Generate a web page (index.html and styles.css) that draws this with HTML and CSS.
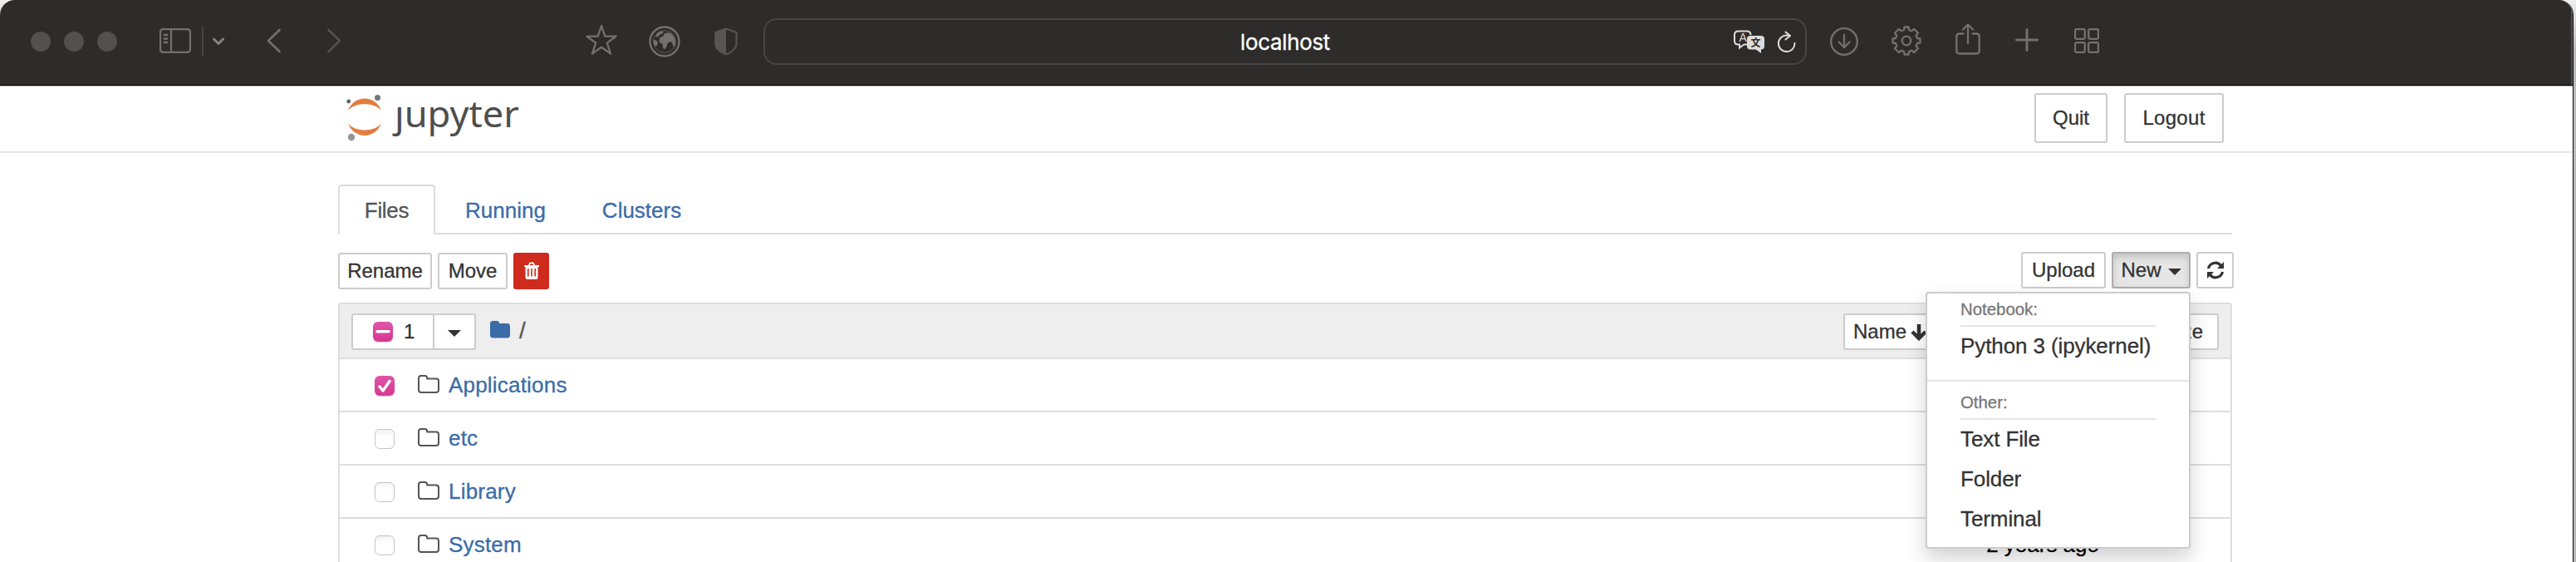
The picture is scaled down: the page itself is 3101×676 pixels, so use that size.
FILE: index.html
```html
<!DOCTYPE html>
<html lang="en">
<head>
<meta charset="utf-8">
<title>Home Page - Select or create a notebook</title>
<link rel="stylesheet" href="styles.css">
</head>
<body>
<div class="desktop">
<div class="window">
  <div class="chrome">
    <div class="lights"><i></i><i></i><i></i></div>
    <svg class="ico sidebar" width="38" height="30" viewBox="0 0 38 30"><rect x="1" y="1" width="36" height="28" rx="3.5"/><path d="M14 1v28M5.500 8h4M5.500 12.500h4M5.500 17h4"/></svg>
    <span class="sep"></span>
    <svg class="ico chev" width="14" height="10" viewBox="0 0 14 10"><path d="M1.500 2L7 7.500 12.500 2"/></svg>
    <svg class="ico back" width="18" height="30" viewBox="0 0 18 30"><path d="M15.500 2L2 15 15.500 28"/></svg>
    <svg class="ico fwd" width="18" height="30" viewBox="0 0 18 30"><path d="M2.500 2L16 15 2.500 28"/></svg>
    <svg class="ico star" width="38" height="38" viewBox="0 0 38 38"><path d="M19 2l4.300 12.700H36.500L25.800 22.600 30 35.500 19 27.800 8 35.500l4.200-12.900L1.500 14.700H14.700z"/></svg>
    <svg class="ico globe" width="38" height="38" viewBox="0 0 38 38"><circle cx="19" cy="19" r="17.500"/><circle class="thin" cx="19" cy="19" r="13.500"/><path class="fill" d="M6 17l3 .5 2 3-1 3-2.500 1.500C6 22.500 5.500 20 6 17zM8.500 11.500C10 9 12 7.300 15 6.500l3 .5-1.500 2.500-3 1-2 2.500-3 .5zM12.500 17l1-3 4-1.500 1-3 5-1.500 4 1.500C30 12 32 15 32 19l-.5 5-1.500 2-2-6-2.500-1-3 2.500-1.500 4.500-2.500 2.500-1.500-2-.5-5-3.500-1z"/></svg>
    <svg class="ico shield" width="28" height="34" viewBox="0 0 28 34"><path d="M14 1.500L26.500 6v14c0 6-6.500 10-12.500 12.500C8 30 1.500 26 1.500 20V6z"/><path class="fill" d="M14 .5L.5 5.500V20c0 6.500 6.500 10.500 13.500 13.500z"/></svg>
    <div class="address">
      <span class="host">localhost</span>
      <svg class="translate" width="38" height="29" viewBox="0 0 38 29"><path class="bubble" d="M16 17.500h-3.500L7 21.500v-4H5.500Q1 17.500 1 13V6Q1 1.500 5.500 1.500H16Q20.500 1.500 20.500 6"/><rect class="solid" x="16" y="7" width="21" height="16.500" rx="4"/><path class="solid" d="M26 23h7v5z"/><text class="ta" x="6.500" y="14">A</text><text class="tb" x="20.500" y="19.500">文</text></svg>
      <svg class="reload" width="23" height="26" viewBox="0 0 23 26"><path d="M15 5.500H12a9.800 9.800 0 1 0 9.500 9.500M10.500 1.500l5.500 4.500-5.500 4.500"/></svg>
    </div>
    <svg class="ico dl" width="34" height="34" viewBox="0 0 34 34"><circle cx="17" cy="17" r="15.800"/><path d="M17 9v15M10.500 17.500L17 24l6.500-6.500"/></svg>
    <svg class="ico gear" width="36" height="36" viewBox="-18 -18 36 36"><circle r="5.300"/><path d="M-3-13 L-2.500-16.500H2.500L3-13 6-11.700 9.300-14 14-9.300 11.700-6 13-3 16.500-2.500V2.500L13 3 11.700 6 14 9.300 9.300 14 6 11.700 3 13 2.500 16.500H-2.500L-3 13-6 11.700-9.300 14-14 9.300-11.700 6-13 3-16.500 2.500V-2.500L-13-3-11.700-6-14-9.300-9.300-14-6-11.700z"/></svg>
    <svg class="ico share" width="30" height="38" viewBox="0 0 30 38"><path d="M9.500 12.500H5Q1.300 12.500 1.300 16V33Q1.300 36.500 5 36.500H25Q28.700 36.500 28.700 33V16Q28.700 12.500 25 12.500H20.500M15 24V2M9 7.500l6-6 6 6"/></svg>
    <svg class="ico plus" width="28" height="28" viewBox="0 0 28 28"><path d="M14 1.500v25M1.500 14h25"/></svg>
    <svg class="ico grid" width="30" height="30" viewBox="0 0 30 30"><rect x="1" y="1" width="11.800" height="11.800" rx="2"/><rect x="17.200" y="1" width="11.800" height="11.800" rx="2"/><rect x="1" y="17.200" width="11.800" height="11.800" rx="2"/><rect x="17.200" y="17.200" width="11.800" height="11.800" rx="2"/></svg>
  </div>

  <header class="header">
    <svg class="logo" width="240" height="78" viewBox="0 0 240 78">
      <path fill="#e27d3f" d="M12 29C19 9.700 45 9.700 52 29 44 18.500 20 18.500 12 29zM12 44.500C19 63.700 45 63.700 52 44.500 44 55 20 55 12 44.500z"/>
      <circle cx="47.500" cy="13.500" r="3.500" fill="#767677"/><circle cx="12.700" cy="18" r="2.400" fill="#616262"/><circle cx="16" cy="61" r="4.200" fill="#989798"/>
      <text x="68" y="48.500" textLength="150" lengthAdjust="spacingAndGlyphs">ȷupyter</text>
    </svg>
    <div class="session"><button class="btn big">Quit</button><button class="btn big">Logout</button></div>
  </header>

  <main class="container">
    <nav class="tabs"><a class="tab active">Files</a><a class="tab running">Running</a><a class="tab">Clusters</a></nav>
    <div class="toolbar">
      <div class="group">
        <button class="btn rename">Rename</button><button class="btn move">Move</button>
        <button class="btn danger"><svg width="20" height="22" viewBox="0 0 20 22"><path fill="#fff" fill-rule="evenodd" d="M1 4h5l1-2.500Q7.500.500 8.500.500h3q1 0 1.500 1L14 4h5v2h-1.500v12.500q0 2.500-2.500 2.500H5q-2.500 0-2.500-2.500V6H1zM8 4h4l-.6-1.700H8.600zM5 8v9.500h1.600V8zM9.200 8v9.500h1.600V8zM13.400 8v9.500H15V8z"/></svg></button>
      </div>
      <div class="group right">
        <button class="btn upload">Upload</button>
        <div class="dropdown">
          <button class="btn new">New<span class="caret"></span></button>
          <div class="menu">
            <div class="menu-head">Notebook:</div>
            <a class="item">Python 3 (ipykernel)</a>
            <div class="divider"></div>
            <div class="menu-head">Other:</div>
            <a class="item">Text File</a>
            <a class="item">Folder</a>
            <a class="item">Terminal</a>
          </div>
        </div>
        <button class="btn refresh"><svg width="22" height="22" viewBox="0 0 22 22"><path class="arc" d="M2.500 9A8.500 8.500 0 0 1 17.500 5.500M19.500 13A8.500 8.500 0 0 1 4.500 16.500"/><path fill="#333" d="M21 1v8h-8zM1 21v-8h8z"/></svg></button>
      </div>
    </div>

    <div class="list">
      <div class="list-head">
        <div class="selector"><span class="count"><span class="check on"><svg width="24" height="24" viewBox="0 0 24 24"><path d="M5 11.700h14"/></svg></span>1</span><span class="toggle"><span class="caret"></span></span></div>
        <svg class="crumb" width="24" height="21" viewBox="0 0 24 21"><path fill="#3b6ca8" d="M0 3.500Q0 0 3.500 0H8q3 0 3 3h9.500Q24 3 24 6.500v10.500Q24 20.500 20.500 20.500h-17Q0 20.500 0 17z"/></svg>
        <span class="slash">/</span>
        <div class="sorts">
          <button class="btn name">Name<svg width="22" height="22" viewBox="0 0 22 22"><path d="M11 2v17M3 11l8 8 8-8"/></svg></button>
          <button class="btn size">size</button>
        </div>
      </div>
      <div class="row"><span class="check on"><svg width="24" height="24" viewBox="0 0 24 24"><path d="M6 13l4 5L18 6.500"/></svg></span><svg class="folder" width="26" height="22" viewBox="0 0 26 22"><path d="M1 4Q1 1 4 1H8.500Q11.300 1 11.300 4.500H22Q25 4.500 25 7.500V18Q25 21 22 21H4Q1 21 1 18z"/></svg><a>Applications</a></div>
      <div class="row"><span class="check"></span><svg class="folder" width="26" height="22" viewBox="0 0 26 22"><path d="M1 4Q1 1 4 1H8.500Q11.300 1 11.300 4.500H22Q25 4.500 25 7.500V18Q25 21 22 21H4Q1 21 1 18z"/></svg><a>etc</a></div>
      <div class="row"><span class="check"></span><svg class="folder" width="26" height="22" viewBox="0 0 26 22"><path d="M1 4Q1 1 4 1H8.500Q11.300 1 11.300 4.500H22Q25 4.500 25 7.500V18Q25 21 22 21H4Q1 21 1 18z"/></svg><a>Library</a></div>
      <div class="row"><span class="check"></span><svg class="folder" width="26" height="22" viewBox="0 0 26 22"><path d="M1 4Q1 1 4 1H8.500Q11.300 1 11.300 4.500H22Q25 4.500 25 7.500V18Q25 21 22 21H4Q1 21 1 18z"/></svg><a>System</a><span class="when">2 years ago</span></div>
    </div>
  </main>
</div>
</div>
</body>
</html>
```

FILE: styles.css
```css
* { box-sizing: border-box; }
body { margin: 0; font-family: "Liberation Sans", Arial, sans-serif; font-size: 26px; color: #333; -webkit-text-stroke: .3px; }
.desktop { height: 676px; overflow: hidden; background: linear-gradient(#eee, #bbb 60px, #b8b8b8); }
.window { width: 3098px; height: 700px; background: #fff; border-right: 1px solid #111; border-radius: 18px 18px 0 0; overflow: hidden; }
svg { display: block; flex: none; }

.chrome { height: 104px; padding: 0 0 2px 37px; display: flex; align-items: flex-start; background: #2e2c2a; border-bottom: 1px solid #b5b5b5; box-shadow: inset 0 -1px #000, inset -2px 0 #514f50; }
.lights { display: flex; gap: 16px; margin-top: 38px; }
.lights i { width: 24px; height: 24px; border-radius: 50%; background: #52514f; }
.ico { fill: none; stroke: #72716f; stroke-width: 2.300; stroke-linecap: round; stroke-linejoin: round; }
.ico .fill { fill: #72716f; stroke: none; }
.ico .thin { stroke-width: 1; stroke: #5c5b59; }
.sidebar { margin: 34px 0 0 51px; }
.sep { width: 2px; height: 36px; margin: 32px 0 0 13px; background: #444341; }
.chev { margin: 45px 0 0 11px; stroke-width: 3; stroke: #858482; }
.back { margin: 34px 0 0 51px; stroke-width: 2.600; }
.fwd { margin: 34px 0 0 54px; stroke: #53524f; stroke-width: 2.600; }
.star { margin: 29px 0 0 294px; }
.globe { margin: 31px 0 0 38px; }
.shield { margin: 33px 0 0 41px; stroke: #575654; stroke-width: 2; }
.ico.shield .fill { fill: #575654; }
.address { flex: none; display: flex; align-items: center; width: 1256px; height: 56px; margin: 22px 0 0 31px; border: 2px solid #474644; border-radius: 16px; color: #fff; }
.host { font: 26px/52px Inter, sans-serif; width: 110px; margin: 2px 484px 0 572px; letter-spacing: -.35px; white-space: nowrap; }
.translate { margin-right: 14px; }
.bubble { fill: none; stroke: #dedcdb; stroke-width: 2; }
.solid { fill: #dedcdb; }
.ta { font: 14px "Liberation Sans", sans-serif; fill: #dedcdb; }
.tb { font: bold 12px "Noto Sans CJK SC", sans-serif; fill: #2e2c2a; }
.reload { fill: none; stroke: #dedcdb; stroke-width: 2; stroke-linecap: round; stroke-linejoin: round; }
.dl { margin: 33px 0 0 28px; }
.gear { margin: 31px 0 0 40px; }
.share { margin: 28px 0 0 41px; }
.plus { margin: 34px 0 0 42px; stroke-width: 3; }
.grid { margin: 34px 0 0 43px; }

.header { height: 80px; padding-left: 407px; display: flex; border-bottom: 2px solid #e7e7e7; }
.logo text { font: 44px "Noto Sans", "Open Sans", sans-serif; fill: #4e4e4e; }
.session { display: flex; gap: 20px; margin: 8px 0 0 1802px; }
.btn { display: flex; align-items: center; justify-content: center; flex: none; height: 44px; padding: 0; margin: 0; border: 2px solid #ccc; border-radius: 3px; background: #fff; color: #333; font: 24px/36px "Liberation Sans", Arial, sans-serif; white-space: nowrap; }
.btn.big { height: 60px; width: 88px; }
.btn.big + .btn.big { width: 120px; letter-spacing: .3px; }

.container { width: 2280px; margin: 38px 0 0 407px; }
.tabs { display: flex; height: 60px; border-bottom: 2px solid #ddd; }
.tab { height: 60px; line-height: 62px; color: #3b6ca8; }
.tab.active { width: 117px; border: 2px solid #ddd; border-bottom: 0; border-radius: 4px 4px 0 0; background: #fff; color: #555; line-height: 58px; text-align: center; letter-spacing: -.3px; }
.tab.running { margin: 0 68px 0 36px; }
.toolbar { display: flex; justify-content: space-between; margin: 21px -2px 0 0; height: 61px; }
.group { display: flex; gap: 7px; margin-top: 1px; }
.group.right { margin-top: 0; }
.rename { width: 113px; }
.move { width: 84px; }
.danger { width: 43px; border-color: #cf2a1e; background: #cf2a1e; }
.upload { width: 102px; }
.dropdown { position: relative; }
.new { width: 95px; gap: 8px; border-color: #adadad; background: #e6e6e6; box-shadow: inset 0 5px 8px rgba(0,0,0,.15); }
.refresh { width: 45px; }
.refresh .arc { fill: none; stroke: #333; stroke-width: 3.200; }
.caret { border: 8px solid transparent; border-top-color: #333; border-bottom: 0; margin-top: 4px; }
.menu { position: absolute; right: 0; top: 48px; z-index: 5; width: 319px; height: 309px; padding: 9px 0; background: #fff; border: 2px solid #ccc; border-radius: 4px; box-shadow: 0 12px 24px rgba(0,0,0,.175); }
.menu-head { height: 31px; margin: 0 40px; font-size: 20.400px; line-height: 20px; color: #777; border-bottom: 2px solid #e5e5e5; }
.item { display: block; height: 48px; line-height: 46px; padding-left: 40px; letter-spacing: -.1px; }
.divider { height: 2px; margin: 16px 0 15px; background: #e5e5e5; }

.list { border: 2px solid #ddd; border-radius: 4px 4px 0 0; height: 330px; }
.list-head { height: 66px; display: flex; padding: 11px 14px 0; background: #eee; border-bottom: 2px solid #ddd; }
.selector { display: flex; width: 150px; height: 44px; border: 2px solid #ccc; border-radius: 3px; background: #fff; font-size: 24px; }
.count { display: flex; align-items: center; width: 98px; padding-left: 24px; gap: 13px; border-right: 2px solid #ccc; }
.toggle { display: flex; flex: 1; align-items: center; justify-content: center; }
.check { flex: none; width: 24px; height: 24px; border: 1px solid #c4c4c4; border-radius: 6px; background: linear-gradient(#f3f3f3, #fff 40%); }
.check.on { border: 0; background: linear-gradient(#df55a8, #d63890); box-shadow: 0 1px 1px #ffc4ec; }
.check path { fill: none; stroke: #fff; stroke-width: 3.400; stroke-linecap: round; stroke-linejoin: round; }
.crumb { margin: 9px 0 0 17px; }
.slash { margin: 3px 0 0 11px; line-height: 36px; font-size: 28px; color: #555; }
.sorts { display: flex; margin-left: auto; gap: 184px; }
.name { width: 118px; justify-content: flex-start; padding-left: 10px; gap: 4px; }
.name path { fill: none; stroke: #333; stroke-width: 4.500; }
.size { width: 150px; justify-content: flex-end; padding-right: 17px; }
.row { display: flex; align-items: center; height: 64px; padding: 0 158px 0 42px; border-bottom: 2px solid #ddd; }
.row .check { margin-top: 2px; }
.row a { margin-left: 11px; color: #3b6ca8; letter-spacing: .2px; }
.folder { margin: -3px 0 0 28px; fill: none; stroke: #555; stroke-width: 2; }
.when { margin-left: auto; color: #000; }
```
